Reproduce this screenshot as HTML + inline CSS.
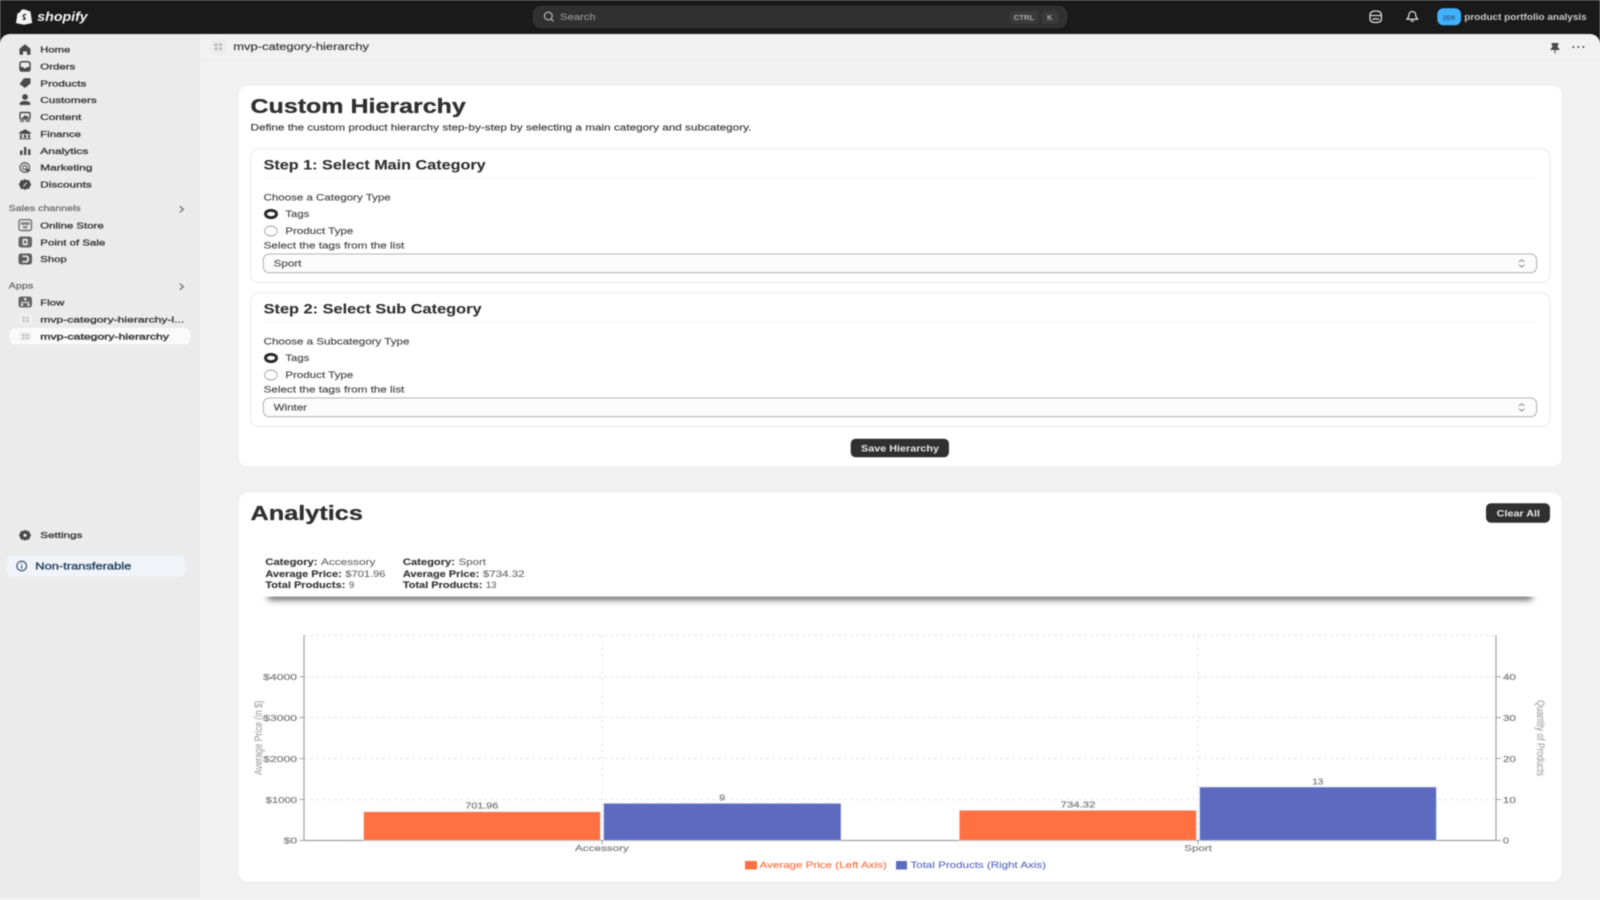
<!DOCTYPE html>
<html lang="en"><head><meta charset="utf-8"><title>Custom Hierarchy</title>
<style>
html,body{margin:0;padding:0;width:1600px;height:900px;overflow:hidden;background:#f1f1f1}
svg{display:block;filter:blur(.5px)}
text{font-family:"Liberation Sans",sans-serif;fill:#303030}
.n{font-size:8.5px;fill:#3a3a3a;stroke:#3a3a3a;stroke-width:.32px}
.h{font-size:8.5px;fill:#666;stroke:#666;stroke-width:.2px}
.l{font-size:9px;fill:#505050;stroke:#505050;stroke-width:.2px}
.t{font-size:20.5px;font-weight:bold;stroke:#303030;stroke-width:.3px}
.s{font-size:14px;font-weight:bold;stroke:#303030;stroke-width:.1px}
.b{font-size:9px;font-weight:bold;fill:#3a3a3a;stroke:#3a3a3a;stroke-width:.15px}
.v{font-size:9px;fill:#666;stroke:#666;stroke-width:.1px}
.w{font-size:9px;font-weight:bold;fill:#e8e8e8}
.a{font-size:8.5px;fill:#858585;stroke:#858585;stroke-width:.25px}
.d{font-size:8.5px;fill:#8a8a8a;stroke:#8a8a8a;stroke-width:.35px}
.r{font-size:9.5px;fill:#a0a0a0;stroke:#a0a0a0;stroke-width:.1px}
.i{fill:#4a4a4a}
.g{stroke:#e4e4e4;stroke-width:1;stroke-dasharray:3 3;fill:none}
.ax{stroke:#a0a0a0;stroke-width:1.2;fill:none}
</style></head>
<body>
<svg width="1600" height="900" viewBox="0 0 1600 900" xmlns="http://www.w3.org/2000/svg">
<defs><filter id="bl" x="-5%" y="-300%" width="110%" height="700%"><feGaussianBlur stdDeviation="3.2"/></filter></defs>
<rect width="1600" height="900" fill="#1a1a1a"/>
<path d="M0 900V44a10 10 0 0 1 10-10H200V900Z" fill="#ebebeb"/>
<path d="M200 34H1590a10 10 0 0 1 10 10V900H200Z" fill="#f1f1f1"/>
<rect x="200" y="59.600" width="1400" height="1" fill="#ebebeb"/>
<rect y="899" width="1600" height="1" fill="#fbfbfb"/>

<!-- top bar -->
<path d="M17.500 13.500 20 12.300c.6-2 2-3 3.600-3 .5 0 .9.2 1.300.6l1.400-.3 1.300 1.200 2.800.4 1.800 11.800-8 1.700-8.200-1.600Z" fill="#f4f4f4"/>
<path d="M26.200 14.700c-.8-.4-2.600-.4-3 1-.4 1.600 2.300 1.700 2 3.100-.2.8-1.400.7-2.500.2" stroke="#1a1a1a" stroke-width="1.200" fill="none"/>
<text x="37.300" y="20.800" font-size="12.500" font-weight="bold" font-style="italic" textLength="50.400" lengthAdjust="spacingAndGlyphs" style="fill:#f4f4f4">shopify</text>

<rect x="533.500" y="6.500" width="533" height="21" rx="8" fill="#303030" stroke="#3a3a3a"/>
<circle cx="548.300" cy="16" r="3.900" fill="none" stroke="#b5b5b5" stroke-width="1.200"/><path d="M551 19 553.500 21.300" stroke="#b5b5b5" stroke-width="1.200"/>
<text x="560" y="20" font-size="9" textLength="35.700" lengthAdjust="spacingAndGlyphs" style="fill:#8c8c8c;stroke:#8c8c8c;stroke-width:.2px">Search</text>
<rect x="1010" y="11.300" width="28.500" height="12.400" rx="3" fill="#3a3a3a"/>
<text x="1013.600" y="20" font-size="7.500" font-weight="bold" textLength="20.600" lengthAdjust="spacingAndGlyphs" style="fill:#a8a8a8">CTRL</text>
<rect x="1042" y="11.300" width="16.400" height="12.400" rx="3" fill="#3a3a3a"/>
<text x="1047" y="20" font-size="7.500" font-weight="bold" textLength="5.600" lengthAdjust="spacingAndGlyphs" style="fill:#a8a8a8">K</text>

<g fill="none" stroke="#d8d8d8" stroke-width="1.300">
<path d="M1370 15c0-3 2-4 5.700-4s5.700 1 5.700 4v4c0 2.500-2 3.500-5.700 3.500s-5.700-1-5.700-3.500Z"/>
<path d="M1370 15.500h11.400M1372.500 18.500c1 1 2 1 3.200 0 1.200 1 2.200 1 3.200 0"/>
<path d="M1412.300 11.500c-2.300 0-3.400 1.700-3.400 3.800 0 2-1.600 3-1.900 3.900h10.600c-.3-.9-1.900-1.900-1.900-3.900 0-2.100-1.100-3.800-3.400-3.800Z"/>
<path d="M1410.800 20.500c.5 1 2.500 1 3 0"/>
</g>
<rect x="1437.300" y="8.300" width="23.700" height="17" rx="6" fill="#3fb1ff"/>
<text x="1449.200" y="19.500" font-size="7" text-anchor="middle" style="fill:#2a5f8e;stroke:#2a5f8e;stroke-width:.2px">ppa</text>
<text x="1464.300" y="20" font-size="9" font-weight="bold" textLength="122.400" lengthAdjust="spacingAndGlyphs" style="fill:#c8c8c8">product portfolio analysis</text>

<!-- sidebar icons -->
<path class="i" d="M25 44.300 30.500 48.800V54.800H27V51.500H23V54.800H19.500V48.800Z"/>
<path d="M20 64c0-1.500.8-2.300 2.300-2.300h5.400c1.500 0 2.300.8 2.300 2.300v5c0 1.300-.8 2-2.300 2h-5.400c-1.500 0-2.300-.7-2.300-2Z" fill="none" stroke="#4a4a4a" stroke-width="1.500"/><path class="i" d="M20 67H23L24 68.300H26L27 67H30V70.500H20Z"/>
<path class="i" d="M24 78.300H30.500V83.500L25 88 19.500 84Z"/>
<circle class="i" cx="25" cy="97" r="2.900"/><path class="i" d="M19.700 105v-1.300c0-1.700 2-2.700 5.300-2.700s5.300 1 5.300 2.700V105Z"/>
<rect x="20" y="112.500" width="10" height="6.500" rx="1.300" fill="none" stroke="#4a4a4a" stroke-width="1.400"/><path class="i" d="M22.500 117.500 25 115 26.500 116.500 28 115.500V118H22.500ZM20 120.500h4v1.200h-4ZM25.500 120.500h4.500v1.200h-4.500Z"/>
<path class="i" d="M25 129.300 30.800 132.500V134H19.200V132.500ZM20 134.800h2v3h-2ZM23.800 134.800h2.400v3h-2.400ZM28 134.800h2v3h-2ZM19.200 138.200H30.800V139.300H19.200Z"/>
<rect class="i" x="20" y="150.500" width="2.500" height="4.500"/><rect class="i" x="24" y="147" width="2.300" height="8"/><rect class="i" x="28" y="149.300" width="2.500" height="5.700"/>
<circle cx="24.700" cy="167.500" r="4.700" fill="none" stroke="#5a5a5a" stroke-width="1.300"/><circle cx="24.700" cy="167.500" r="2" fill="none" stroke="#5a5a5a" stroke-width="1.200"/><path class="i" d="M25.500 168 31 170.500 28.500 171.500 27.500 173.300Z"/>
<path class="i" d="M25 179 26.800 180.300 29 180 29.800 182 31.200 184.500 29.800 187 29 189 26.800 188.700 25 190 23.200 188.700 21 189 20.200 187 18.800 184.500 20.200 182 21 180 23.200 180.300Z"/><path d="M23.300 186.300 26.700 182.700" stroke="#ebebeb" stroke-width="1"/>

<rect x="19" y="219.700" width="12.500" height="10.800" rx="2" fill="none" stroke="#707070" stroke-width="1.400"/><path class="i" d="M21 222H29.500L30 224.500 27.500 225.300 25.200 224.700 23 225.300 20.500 224.500ZM23 226H27.500V228.500H23Z" opacity=".6"/>
<rect x="18.500" y="236.500" width="13.500" height="11" rx="2.500" fill="#666"/><rect x="22.700" y="238.700" width="5" height="6.600" rx="1" fill="#ebebeb"/><rect fill="#666" x="24" y="240.500" width="2.400" height="3"/>
<rect x="18.500" y="253.500" width="13.500" height="11" rx="2.500" fill="#5f5f5f"/><path d="M22.500 255.500H26c2 0 3 1.300 3 3.500s-1 3.500-3 3.500H22.500V261H26c.8 0 1.200-.8 1.200-2S26.800 257 26 257H22.500Z" fill="#ebebeb"/>
<rect x="18.500" y="296.500" width="13.500" height="11" rx="2.500" fill="#666"/><path d="M25.300 298.500V301M22 305V302.500H28.500V305" stroke="#ebebeb" fill="none"/><circle cx="22" cy="305" r="1.200" fill="#ebebeb"/><circle cx="28.500" cy="305" r="1.200" fill="#ebebeb"/><circle cx="25.300" cy="299" r="1.200" fill="#ebebeb"/>
<rect x="10" y="328" width="180" height="16.300" rx="5" fill="#fafafa"/>
<rect x="19" y="314.500" width="13" height="10" rx="2.500" fill="#f1f1f1"/>
<rect x="19" y="331.500" width="13" height="10" rx="2.500" fill="#f1f1f1"/>
<g fill="#c8c8c8"><rect x="22" y="316.800" width="3" height="2.300"/><rect x="26" y="316.800" width="3" height="2.300"/><rect x="22" y="320" width="3" height="2.300"/><rect x="26" y="320" width="3" height="2.300"/>
<rect x="22" y="333.800" width="3" height="2.300"/><rect x="26" y="333.800" width="3" height="2.300"/><rect x="22" y="337" width="3" height="2.300"/><rect x="26" y="337" width="3" height="2.300"/></g>
<path class="i" d="M25 529.800 26.600 531 28.700 530.700 29.600 532.600 31 535.300 29.600 538 28.700 539.900 26.600 539.600 25 540.800 23.400 539.600 21.300 539.900 20.400 538 19 535.300 20.400 532.600 21.300 530.700 23.400 531Z"/><circle cx="25" cy="535.300" r="1.600" fill="#ebebeb"/>
<path d="M179.800 206.300 183.300 209.300 179.800 212.300M179.800 283.700 183.300 286.700 179.800 289.700" fill="none" stroke="#6a6a6a" stroke-width="1.200"/>

<!-- sidebar text -->
<text class="n" x="40.300" y="52.700" textLength="30" lengthAdjust="spacingAndGlyphs">Home</text>
<text class="n" x="40.300" y="69.500" textLength="35" lengthAdjust="spacingAndGlyphs">Orders</text>
<text class="n" x="40.300" y="86.300" textLength="46" lengthAdjust="spacingAndGlyphs">Products</text>
<text class="n" x="40.300" y="103" textLength="56.400" lengthAdjust="spacingAndGlyphs">Customers</text>
<text class="n" x="40.300" y="120" textLength="41" lengthAdjust="spacingAndGlyphs">Content</text>
<text class="n" x="40.300" y="137" textLength="40.700" lengthAdjust="spacingAndGlyphs">Finance</text>
<text class="n" x="40.300" y="154" textLength="48" lengthAdjust="spacingAndGlyphs">Analytics</text>
<text class="n" x="40.300" y="170.600" textLength="52" lengthAdjust="spacingAndGlyphs">Marketing</text>
<text class="n" x="40.300" y="187.600" textLength="51.400" lengthAdjust="spacingAndGlyphs">Discounts</text>
<text class="h" x="8.700" y="211" textLength="72" lengthAdjust="spacingAndGlyphs">Sales channels</text>
<text class="n" x="40.300" y="228.400" textLength="63.400" lengthAdjust="spacingAndGlyphs">Online Store</text>
<text class="n" x="40.300" y="245.300" textLength="65" lengthAdjust="spacingAndGlyphs">Point of Sale</text>
<text class="n" x="40.300" y="262" textLength="26.400" lengthAdjust="spacingAndGlyphs">Shop</text>
<text class="h" x="8.700" y="288.300" textLength="24.600" lengthAdjust="spacingAndGlyphs">Apps</text>
<text class="n" x="40.300" y="305.600" textLength="24" lengthAdjust="spacingAndGlyphs">Flow</text>
<text class="n" x="40.300" y="322.500" textLength="144" lengthAdjust="spacingAndGlyphs">mvp-category-hierarchy-l...</text>
<text class="n" x="40.300" y="339.500" textLength="128.700" lengthAdjust="spacingAndGlyphs" style="stroke-width:.4px">mvp-category-hierarchy</text>
<text class="n" x="40.300" y="538" textLength="42" lengthAdjust="spacingAndGlyphs">Settings</text>
<rect x="6.700" y="555.700" width="178.300" height="21" rx="5" fill="#f0f3f8"/>
<circle cx="21.700" cy="566" r="4.800" fill="none" stroke="#2a4a6b" stroke-width="1.100"/><path d="M21.700 565.300V568.800M21.700 563.100V564.100" stroke="#2a4a6b" stroke-width="1.100"/>
<text x="35.300" y="569.500" font-size="10" textLength="96" lengthAdjust="spacingAndGlyphs" style="fill:#1f3f60;stroke:#1f3f60;stroke-width:.32px">Non-transferable</text>

<!-- page header -->
<rect x="211" y="39.500" width="15" height="14" rx="3" fill="#ebebeb"/>
<g fill="#b8b8b8"><rect x="214.500" y="43.500" width="3" height="2.500"/><rect x="219" y="43.500" width="3" height="2.500"/><rect x="214.500" y="47.500" width="3" height="2.500"/><rect x="219" y="47.500" width="3" height="2.500"/></g>
<text x="233.300" y="50.200" font-size="10" textLength="135.700" lengthAdjust="spacingAndGlyphs" style="fill:#3c3c3c;stroke:#3c3c3c;stroke-width:.2px">mvp-category-hierarchy</text>
<path class="i" d="M1551.500 43H1558.500V44.200L1557.800 45V47.500L1559.500 49V50H1555.500V53.500H1554.500V50H1550.500V49L1552.200 47.500V45L1551.500 44.200Z"/>
<circle class="i" cx="1573.300" cy="47" r="1"/><circle class="i" cx="1578.300" cy="47" r="1"/><circle class="i" cx="1583.300" cy="47" r="1"/>

<!-- card 1 -->
<rect x="238" y="85" width="1324.500" height="382.300" rx="10" fill="#fff" stroke="#ebebeb"/>
<text class="t" x="250.500" y="113" textLength="215.300" lengthAdjust="spacingAndGlyphs">Custom Hierarchy</text>
<text class="l" x="250.500" y="130.300" textLength="500.900" lengthAdjust="spacingAndGlyphs" style="fill:#444;stroke:#444">Define the custom product hierarchy step-by-step by selecting a main category and subcategory.</text>

<rect x="250.700" y="148.700" width="1299.300" height="133.800" rx="8" fill="#fff" stroke="#e8e8e8"/>
<text class="s" x="263.600" y="169.500" textLength="222.100" lengthAdjust="spacingAndGlyphs">Step 1: Select Main Category</text>
<path d="M263.600 178.500H1536.700" stroke="#f1f1f6"/>
<text class="l" x="263.600" y="200.300" textLength="127.100" lengthAdjust="spacingAndGlyphs">Choose a Category Type</text>
<ellipse cx="271" cy="214" rx="5.500" ry="3.700" fill="#fff" stroke="#262626" stroke-width="2.900"/>
<text class="l" x="285.400" y="217.200" textLength="23.900" lengthAdjust="spacingAndGlyphs">Tags</text>
<ellipse cx="271" cy="231" rx="6.300" ry="5" fill="#fff" stroke="#a0a0a0" stroke-width=".9"/>
<text class="l" x="285.400" y="233.800" textLength="67.800" lengthAdjust="spacingAndGlyphs">Product Type</text>
<text class="l" x="263.600" y="248.300" textLength="140.700" lengthAdjust="spacingAndGlyphs">Select the tags from the list</text>
<rect x="263.300" y="254" width="1273.400" height="18.700" rx="6" fill="#fcfcfc" stroke="#b5b5b5" stroke-width="1.100"/>
<text class="l" x="273.600" y="266.400" textLength="27.800" lengthAdjust="spacingAndGlyphs">Sport</text>
<path d="M1519 262 1521.700 259.700 1524.400 262M1519 264.800 1521.700 267 1524.400 264.800" fill="none" stroke="#777" stroke-width=".9"/>

<rect x="250.700" y="292.700" width="1299.300" height="133.800" rx="8" fill="#fff" stroke="#e8e8e8"/>
<text class="s" x="263.600" y="313.300" textLength="218" lengthAdjust="spacingAndGlyphs">Step 2: Select Sub Category</text>
<path d="M263.600 322.500H1536.700" stroke="#f1f1f6"/>
<text class="l" x="263.600" y="344.300" textLength="145.800" lengthAdjust="spacingAndGlyphs">Choose a Subcategory Type</text>
<ellipse cx="271" cy="358" rx="5.500" ry="3.700" fill="#fff" stroke="#262626" stroke-width="2.900"/>
<text class="l" x="285.400" y="361.200" textLength="23.900" lengthAdjust="spacingAndGlyphs">Tags</text>
<ellipse cx="271" cy="375" rx="6.300" ry="5" fill="#fff" stroke="#a0a0a0" stroke-width=".9"/>
<text class="l" x="285.400" y="377.800" textLength="67.800" lengthAdjust="spacingAndGlyphs">Product Type</text>
<text class="l" x="263.600" y="392.300" textLength="140.700" lengthAdjust="spacingAndGlyphs">Select the tags from the list</text>
<rect x="263.300" y="398" width="1273.400" height="18.700" rx="6" fill="#fcfcfc" stroke="#b5b5b5" stroke-width="1.100"/>
<text class="l" x="273.600" y="410.400" textLength="33.400" lengthAdjust="spacingAndGlyphs">Winter</text>
<path d="M1519 406 1521.700 403.700 1524.400 406M1519 408.800 1521.700 411 1524.400 408.800" fill="none" stroke="#777" stroke-width=".9"/>

<rect x="850.700" y="438.700" width="98.300" height="18.600" rx="5" fill="#303030"/>
<text class="w" x="861" y="451.500" textLength="78" lengthAdjust="spacingAndGlyphs">Save Hierarchy</text>

<!-- card 2 -->
<rect x="238" y="492" width="1324.500" height="390.300" rx="10" fill="#fff" stroke="#ebebeb"/>
<text class="t" x="250.500" y="520" textLength="112.400" lengthAdjust="spacingAndGlyphs">Analytics</text>
<rect x="1486" y="503.300" width="64" height="19.400" rx="5" fill="#303030"/>
<text class="w" x="1496.700" y="516.700" textLength="43.300" lengthAdjust="spacingAndGlyphs">Clear All</text>

<rect x="268" y="590" width="1264" height="10" fill="#6a6a6a" filter="url(#bl)"/>
<rect x="255" y="540" width="1290" height="56.600" fill="#fff"/>
<text class="b" x="265.400" y="565" textLength="52.100" lengthAdjust="spacingAndGlyphs">Category:</text><text class="v" x="321" y="565" textLength="54.400" lengthAdjust="spacingAndGlyphs">Accessory</text>
<text class="b" x="265.400" y="576.800" textLength="76.400" lengthAdjust="spacingAndGlyphs">Average Price:</text><text class="v" x="345.400" y="576.800" textLength="40" lengthAdjust="spacingAndGlyphs">$701.96</text>
<text class="b" x="265.400" y="587.800" textLength="80" lengthAdjust="spacingAndGlyphs">Total Products:</text><text class="v" x="349" y="587.800" textLength="5.300" lengthAdjust="spacingAndGlyphs">9</text>
<text class="b" x="402.900" y="565" textLength="52.100" lengthAdjust="spacingAndGlyphs">Category:</text><text class="v" x="458.600" y="565" textLength="27.400" lengthAdjust="spacingAndGlyphs">Sport</text>
<text class="b" x="402.900" y="576.800" textLength="76.400" lengthAdjust="spacingAndGlyphs">Average Price:</text><text class="v" x="482.900" y="576.800" textLength="41.700" lengthAdjust="spacingAndGlyphs">$734.32</text>
<text class="b" x="402.900" y="587.800" textLength="79.600" lengthAdjust="spacingAndGlyphs">Total Products:</text><text class="v" x="486" y="587.800" textLength="10.400" lengthAdjust="spacingAndGlyphs">13</text>

<!-- chart -->
<path class="g" d="M304 635.500H1496M304 676.700H1496M304 717.500H1496M304 758.500H1496M304 799.500H1496M602 635.500V840M1198 635.500V840"/>
<path class="ax" d="M304 635.300V840.500H1496V635.300"/>
<path d="M299.500 676.700H304M299.500 717.500H304M299.500 758.500H304M299.500 799.500H304M299.500 840.500H304M1496 676.700H1501M1496 717.500H1501M1496 758.500H1501M1496 799.500H1501M1496 840.500H1501M602 840.500V844.500M1198 840.500V844.500" stroke="#a0a0a0" fill="none"/>
<rect x="363.600" y="811.700" width="236.800" height="28.800" fill="#ff7043" stroke="#e4e4e4" stroke-width=".7"/>
<rect x="603.600" y="803.300" width="237.400" height="37.200" fill="#5c6bc0" stroke="#dcdff0" stroke-width=".7"/>
<rect x="959.300" y="810.300" width="237.100" height="30.200" fill="#ff7043" stroke="#e4e4e4" stroke-width=".7"/>
<rect x="1199.600" y="787" width="236.800" height="53.500" fill="#5c6bc0" stroke="#dcdff0" stroke-width=".7"/>
<text class="d" x="465.400" y="808.700" textLength="32.800" lengthAdjust="spacingAndGlyphs">701.96</text>
<text class="d" x="719.300" y="800.700" textLength="5.700" lengthAdjust="spacingAndGlyphs">9</text>
<text class="d" x="1060.700" y="807.700" textLength="34.700" lengthAdjust="spacingAndGlyphs">734.32</text>
<text class="d" x="1312.500" y="784.400" textLength="10.700" lengthAdjust="spacingAndGlyphs">13</text>
<text class="a" x="263.200" y="680" textLength="33.900" lengthAdjust="spacingAndGlyphs">$4000</text>
<text class="a" x="263.200" y="720.800" textLength="33.900" lengthAdjust="spacingAndGlyphs">$3000</text>
<text class="a" x="263.200" y="761.800" textLength="33.900" lengthAdjust="spacingAndGlyphs">$2000</text>
<text class="a" x="265.700" y="802.800" textLength="31.400" lengthAdjust="spacingAndGlyphs">$1000</text>
<text class="a" x="283.600" y="843.700" textLength="13.500" lengthAdjust="spacingAndGlyphs">$0</text>
<text class="a" x="1502.900" y="680" textLength="13.100" lengthAdjust="spacingAndGlyphs">40</text>
<text class="a" x="1502.900" y="720.800" textLength="13.100" lengthAdjust="spacingAndGlyphs">30</text>
<text class="a" x="1502.900" y="761.800" textLength="13.100" lengthAdjust="spacingAndGlyphs">20</text>
<text class="a" x="1502.900" y="802.800" textLength="13.100" lengthAdjust="spacingAndGlyphs">10</text>
<text class="a" x="1502.900" y="843.700" textLength="6.100" lengthAdjust="spacingAndGlyphs">0</text>
<text class="r" transform="translate(262 775) rotate(-90) scale(1,1.2)" x="0" y="0" textLength="74.500" lengthAdjust="spacingAndGlyphs">Average Price (in $)</text>
<text class="r" transform="translate(1537 700) rotate(90) scale(1,1.2)" x="0" y="0" textLength="76" lengthAdjust="spacingAndGlyphs">Quantity of Products</text>
<text class="a" x="575" y="851" textLength="53.900" lengthAdjust="spacingAndGlyphs">Accessory</text>
<text class="a" x="1184.300" y="851" textLength="27.500" lengthAdjust="spacingAndGlyphs">Sport</text>
<rect x="745" y="861" width="12" height="8.500" fill="#ff7043"/>
<text x="759.500" y="867.800" font-size="9" textLength="127.200" lengthAdjust="spacingAndGlyphs" style="fill:#ff7043;stroke:#ff7043;stroke-width:.12px">Average Price (Left Axis)</text>
<rect x="896" y="861" width="11" height="8.500" fill="#5c6bc0"/>
<text x="910.500" y="867.800" font-size="9" textLength="135.500" lengthAdjust="spacingAndGlyphs" style="fill:#5c6bc0;stroke:#5c6bc0;stroke-width:.12px">Total Products (Right Axis)</text>
</svg>
</body></html>
